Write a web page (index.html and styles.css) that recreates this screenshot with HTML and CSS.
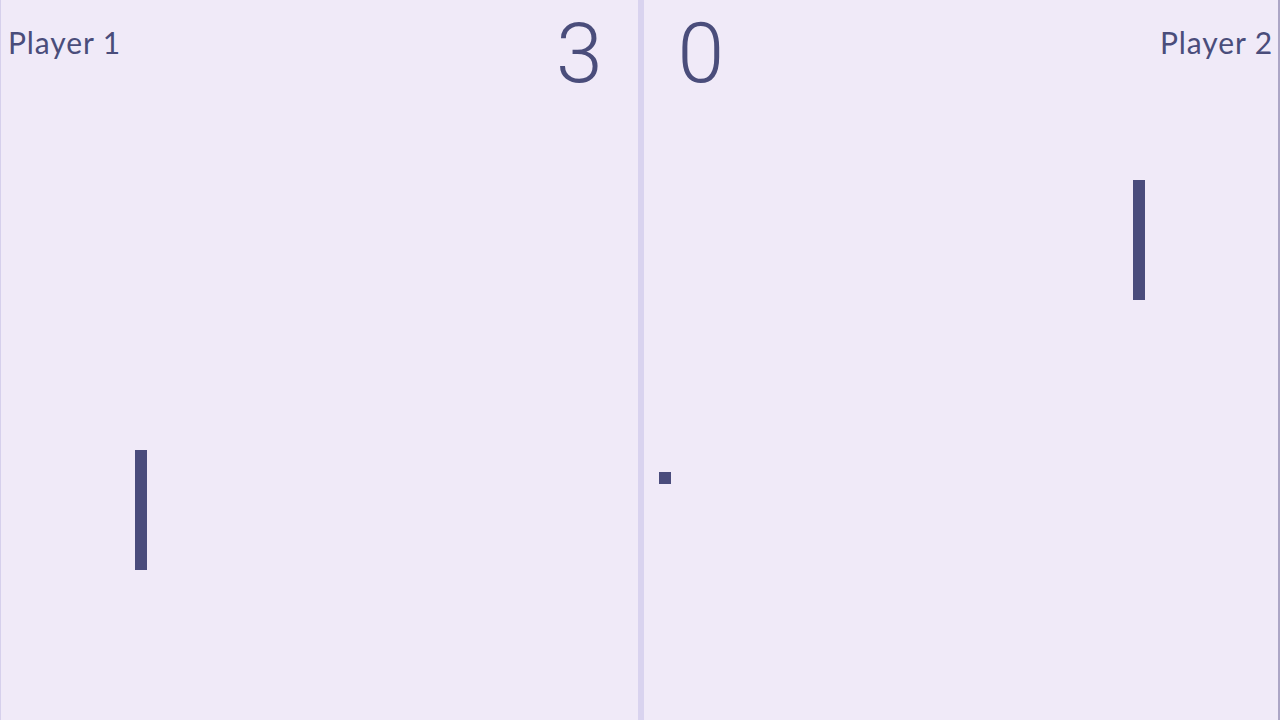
FILE: index.html
```html
<!DOCTYPE html>
<html lang="en">
<head>
<meta charset="utf-8">
<title>Pong</title>
<link rel="stylesheet" href="styles.css">
</head>
<body>
<main class="court">
  <section class="half half-left">
    <div class="label">Player 1</div>
    <div class="score">3</div>
    <div class="paddle paddle-left"></div>
  </section>
  <div class="net"></div>
  <section class="half half-right">
    <div class="score">0</div>
    <div class="label">Player 2</div>
    <div class="paddle paddle-right"></div>
    <div class="ball"></div>
  </section>
</main>
</body>
</html>
```

FILE: styles.css
```css
* { box-sizing: border-box; }
html, body {
  margin: 0;
  padding: 0;
  width: 1280px;
  height: 720px;
  overflow: hidden;
  background: #f0eaf8;
}
.court {
  display: flex;
  width: 1280px;
  height: 720px;
  background: #f0eaf8;
  border-left: 1px solid #d6d0ec;
  border-right: 2px solid #aca6c6;
  color: #4a4d7b;
}
.half {
  flex: 1;
  position: relative;
  display: flex;
  justify-content: space-between;
  align-items: flex-start;
}
.half-left { padding: 0 35px 0 7px; }
.half-right { padding: 0 6px 0 34px; }
.net {
  width: 6px;
  flex: none;
  background: #d9d3ef;
}
.label {
  font-family: "Lato", "Noto Sans", sans-serif;
  font-size: 30px;
  font-weight: 400;
  line-height: 1;
  margin-top: 27px;
  letter-spacing: 0.9px;
}
.half-right .label { margin-right: -1px; }
.score {
  font-family: "Roboto", "Inter", sans-serif;
  font-size: 84px;
  font-weight: 300;
  line-height: 1;
  margin-top: 12px;
}
.paddle {
  position: absolute;
  width: 12px;
  height: 120px;
  background: #4a4c7c;
}
.paddle-left { left: 134px; top: 450px; }
.paddle-right { left: 489px; top: 180px; }
.ball {
  position: absolute;
  left: 15px;
  top: 472px;
  width: 12px;
  height: 12px;
  background: #4a4c7c;
}
```
